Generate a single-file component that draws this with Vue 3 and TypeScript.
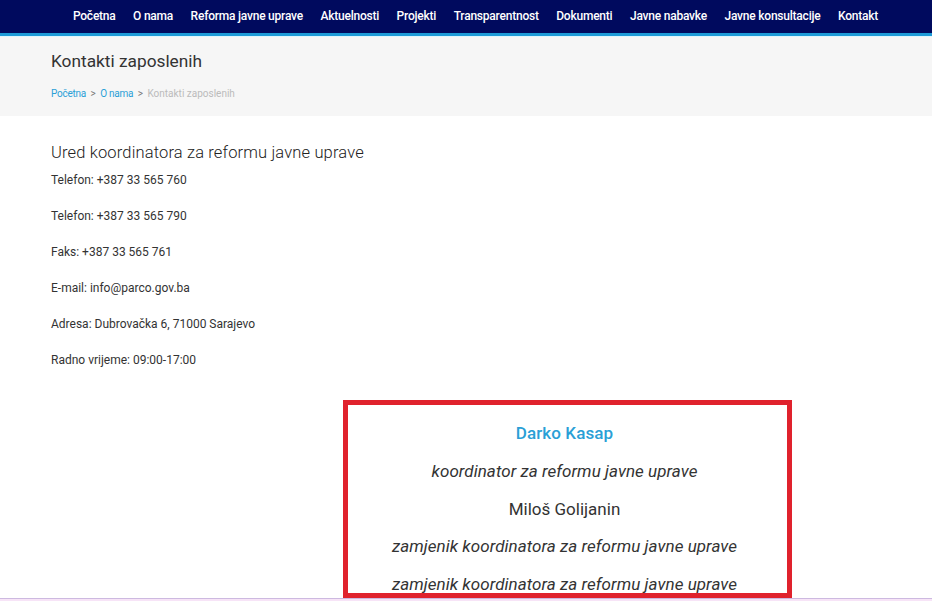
<template>
  <div class="page">
    <nav class="topbar">
      <a v-for="item in menu" :key="item" class="topbar-link">{{ item }}</a>
    </nav>

    <header class="title-band">
      <h1>Kontakti zaposlenih</h1>
      <div class="crumbs">
        <a>Početna</a>
        <span class="sep">&gt;</span>
        <a>O nama</a>
        <span class="sep">&gt;</span>
        <span class="current">Kontakti zaposlenih</span>
      </div>
    </header>

    <main class="content">
      <h2>Ured koordinatora za reformu javne uprave</h2>
      <p v-for="line in contact" :key="line" class="contact-line">{{ line }}</p>

      <section class="people">
        <p class="lead">Darko Kasap</p>
        <p class="role">koordinator za reformu javne uprave</p>
        <p class="name">Miloš Golijanin</p>
        <p class="role">zamjenik koordinatora za reformu javne uprave</p>
        <p class="role">zamjenik koordinatora za reformu javne uprave</p>
      </section>
    </main>

    <div class="edge"></div>
  </div>
</template>

<script setup lang="ts">
const menu: string[] = [
  "Početna",
  "O nama",
  "Reforma javne uprave",
  "Aktuelnosti",
  "Projekti",
  "Transparentnost",
  "Dokumenti",
  "Javne nabavke",
  "Javne konsultacije",
  "Kontakt",
];

const contact: string[] = [
  "Telefon: +387 33 565 760",
  "Telefon: +387 33 565 790",
  "Faks: +387 33 565 761",
  "E-mail: info@parco.gov.ba",
  "Adresa: Dubrovačka 6, 71000 Sarajevo",
  "Radno vrijeme: 09:00-17:00",
];
</script>

<style>
html,
body {
  margin: 0;
  overflow: hidden;
  background: #fff;
}
</style>

<style scoped>
.page {
  width: 932px;
  height: 601px;
  overflow: hidden;
  font-family: Roboto, "Liberation Sans", sans-serif;
  color: #2f2f2f;
}
.topbar {
  height: 31px;
  background: #000a5e;
  border-bottom: 3px solid #1d9bd8;
  display: flex;
  justify-content: center;
  gap: 17.5px;
  padding: 0 0 2px 19px;
  align-items: center;
  box-sizing: content-box;
}
.topbar-link {
  color: #fff;
  font-size: 12px;
  font-weight: 500;
  letter-spacing: -0.22px;
  white-space: nowrap;
}
.title-band {
  height: 79px;
  background: #f6f6f6;
  border-top: 1px solid #dff6fd;
  padding: 0 51px;
}
.title-band h1 {
  margin: 0;
  padding-top: 13px;
  font-size: 17.3px;
  line-height: 22px;
  font-weight: 400;
  color: #333;
}
.crumbs {
  margin-top: 15px;
  display: flex;
  gap: 4.5px;
  font-size: 10px;
  line-height: 14px;
}
.crumbs a {
  color: #2a9fd6;
  letter-spacing: -0.25px;
}
.crumbs .sep {
  color: #777;
}
.crumbs .current {
  color: #bbb;
}
.content {
  padding: 27px 51px 0;
}
.content h2 {
  margin: 0 0 8px;
  font-size: 16.5px;
  line-height: 20px;
  font-weight: 300;
  letter-spacing: 0.15px;
  color: #222;
}
.contact-line {
  margin: 0 0 18px;
  font-size: 12px;
  line-height: 18px;
  color: #333;
}
.people {
  width: 449px;
  height: 198px;
  box-sizing: border-box;
  margin: 31px 0 0 292px;
  border: 5px solid #e0222d;
  text-align: center;
  padding: 17px 6px 0 0;
  overflow: hidden;
}
.people p {
  margin: 0 0 15.75px;
  font-size: 17px;
  line-height: 22px;
  color: #333;
}
.people .lead {
  color: #2a9fd6;
  font-weight: 500;
  letter-spacing: 0.1px;
}
.people .name {
  letter-spacing: 0;
}
.people .role {
  font-style: italic;
  letter-spacing: 0.05px;
}
.edge {
  position: fixed;
  left: 0;
  right: 0;
  top: 598px;
  height: 3px;
  background: #f7e4f7;
  border-top: 1px solid #cdb9e0;
  box-sizing: border-box;
}
</style>
